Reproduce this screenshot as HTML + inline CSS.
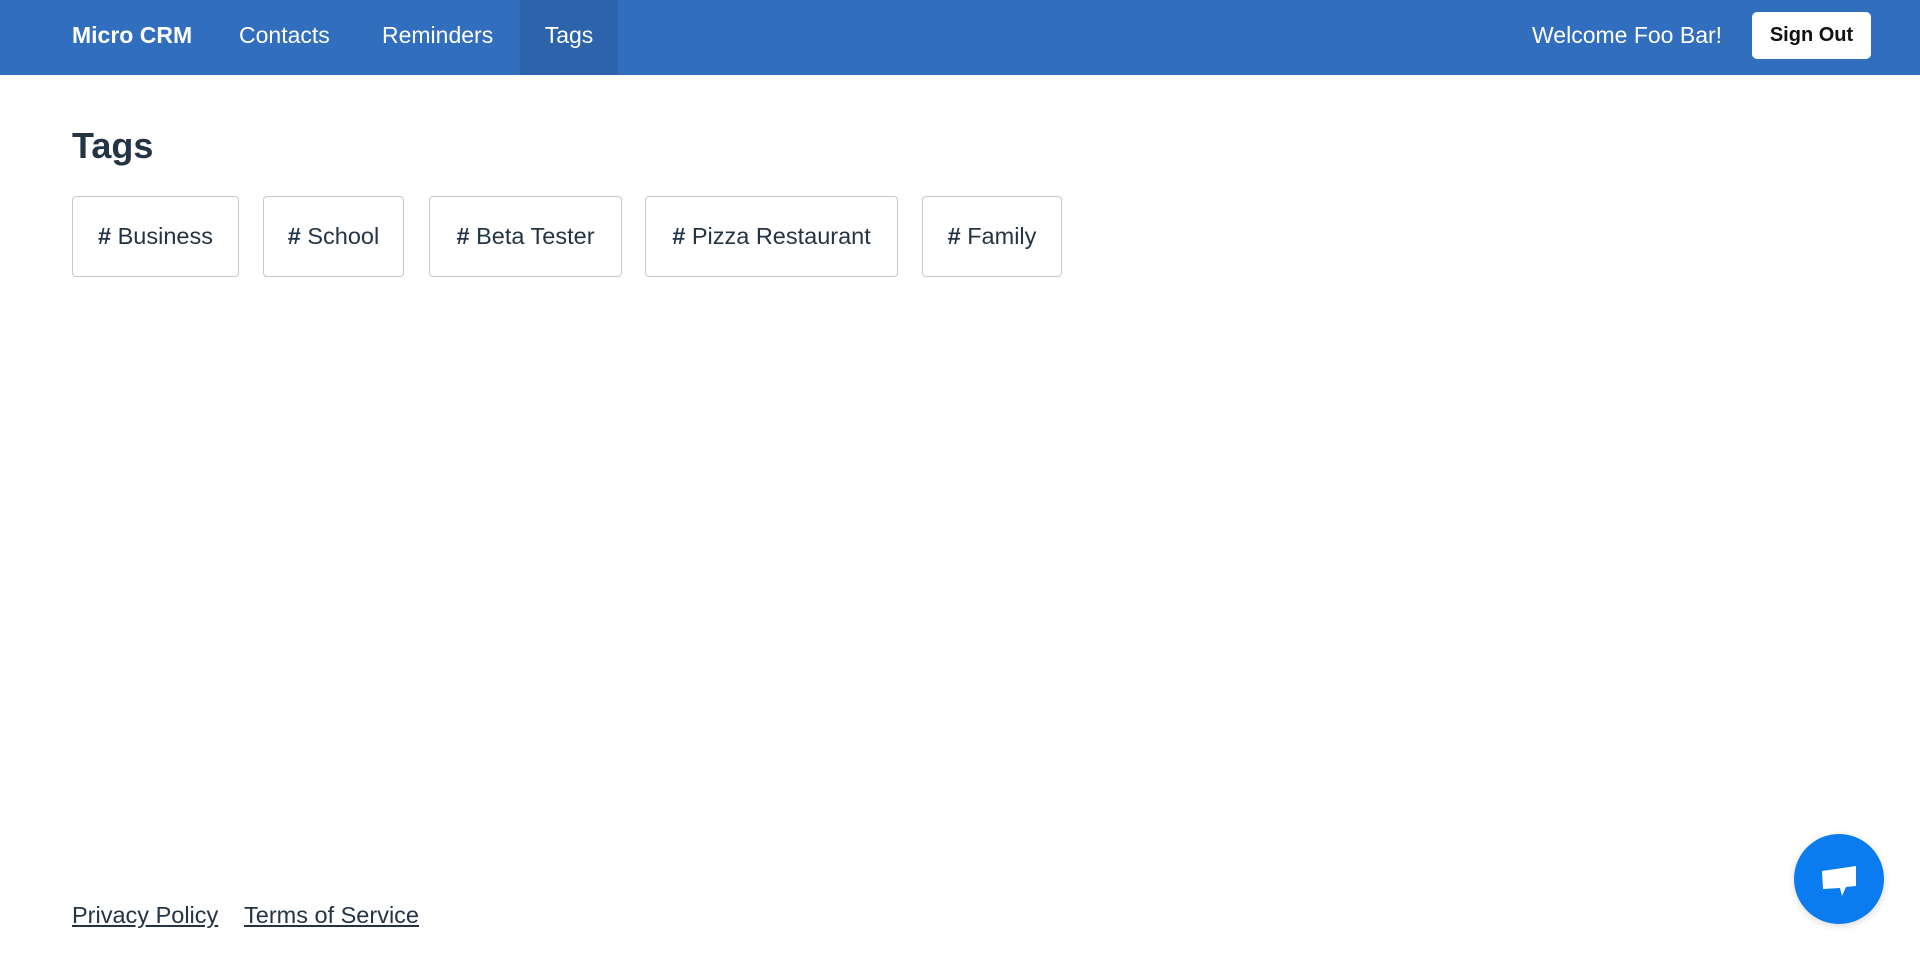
<!DOCTYPE html>
<html><head><meta charset="utf-8"><style>
*{margin:0;padding:0;box-sizing:border-box}
body{width:1920px;height:954px;background:#fff;font-family:"Liberation Sans",sans-serif;position:relative;overflow:hidden;color:#233445}
.nav{position:absolute;left:0;top:0;width:1920px;height:75px;background:#316ebe}
.nav a{position:absolute;top:0;height:75px;line-height:70px;color:#fff;font-size:23px;text-decoration:none;white-space:nowrap}
.active{background:#2c63aa}
.btn{position:absolute;left:1752px;top:12px;width:119px;height:47px;background:#fff;border-radius:5px;color:#111;font-weight:bold;font-size:20px;line-height:47px;text-align:center}
h1{position:absolute;left:72px;top:125px;font-size:36px;font-weight:bold;color:#233445}
.tag{position:absolute;top:196px;height:81px;border:1px solid #c8c8c8;border-radius:4px;font-size:23.5px;line-height:79px;text-align:center;color:#233445;white-space:nowrap}
.tag b{font-weight:bold}
.foot{position:absolute;top:902px;font-size:23.5px;color:#233445;text-decoration:underline}
.chat{position:absolute;left:1794px;top:834px;width:90px;height:90px;border-radius:50%;background:#0a7cf0;box-shadow:0 2px 8px rgba(0,0,0,.15)}
</style></head><body>
<div class="nav">
<a style="left:72px;font-weight:bold">Micro CRM</a>
<a style="left:239px">Contacts</a>
<a style="left:382px">Reminders</a>
<a class="active" style="left:520px;width:98px;text-align:center">Tags</a>
<a style="left:1532px">Welcome Foo Bar!</a>
<div class="btn">Sign Out</div>
</div>
<h1>Tags</h1>
<div class="tag" style="left:72px;width:167px"><b>#</b> Business</div>
<div class="tag" style="left:263px;width:141px"><b>#</b> School</div>
<div class="tag" style="left:429px;width:193px"><b>#</b> Beta Tester</div>
<div class="tag" style="left:645px;width:253px"><b>#</b> Pizza Restaurant</div>
<div class="tag" style="left:922px;width:140px"><b>#</b> Family</div>
<a class="foot" style="left:72px">Privacy Policy</a>
<a class="foot" style="left:244px">Terms of Service</a>
<div class="chat"><svg width="90" height="90" viewBox="0 0 90 90"><path d="M28 37 L62 32 L62 52 L52 53 L48 62 L46 54 L29 55 Z" fill="#fff"/></svg></div>
</body></html>
